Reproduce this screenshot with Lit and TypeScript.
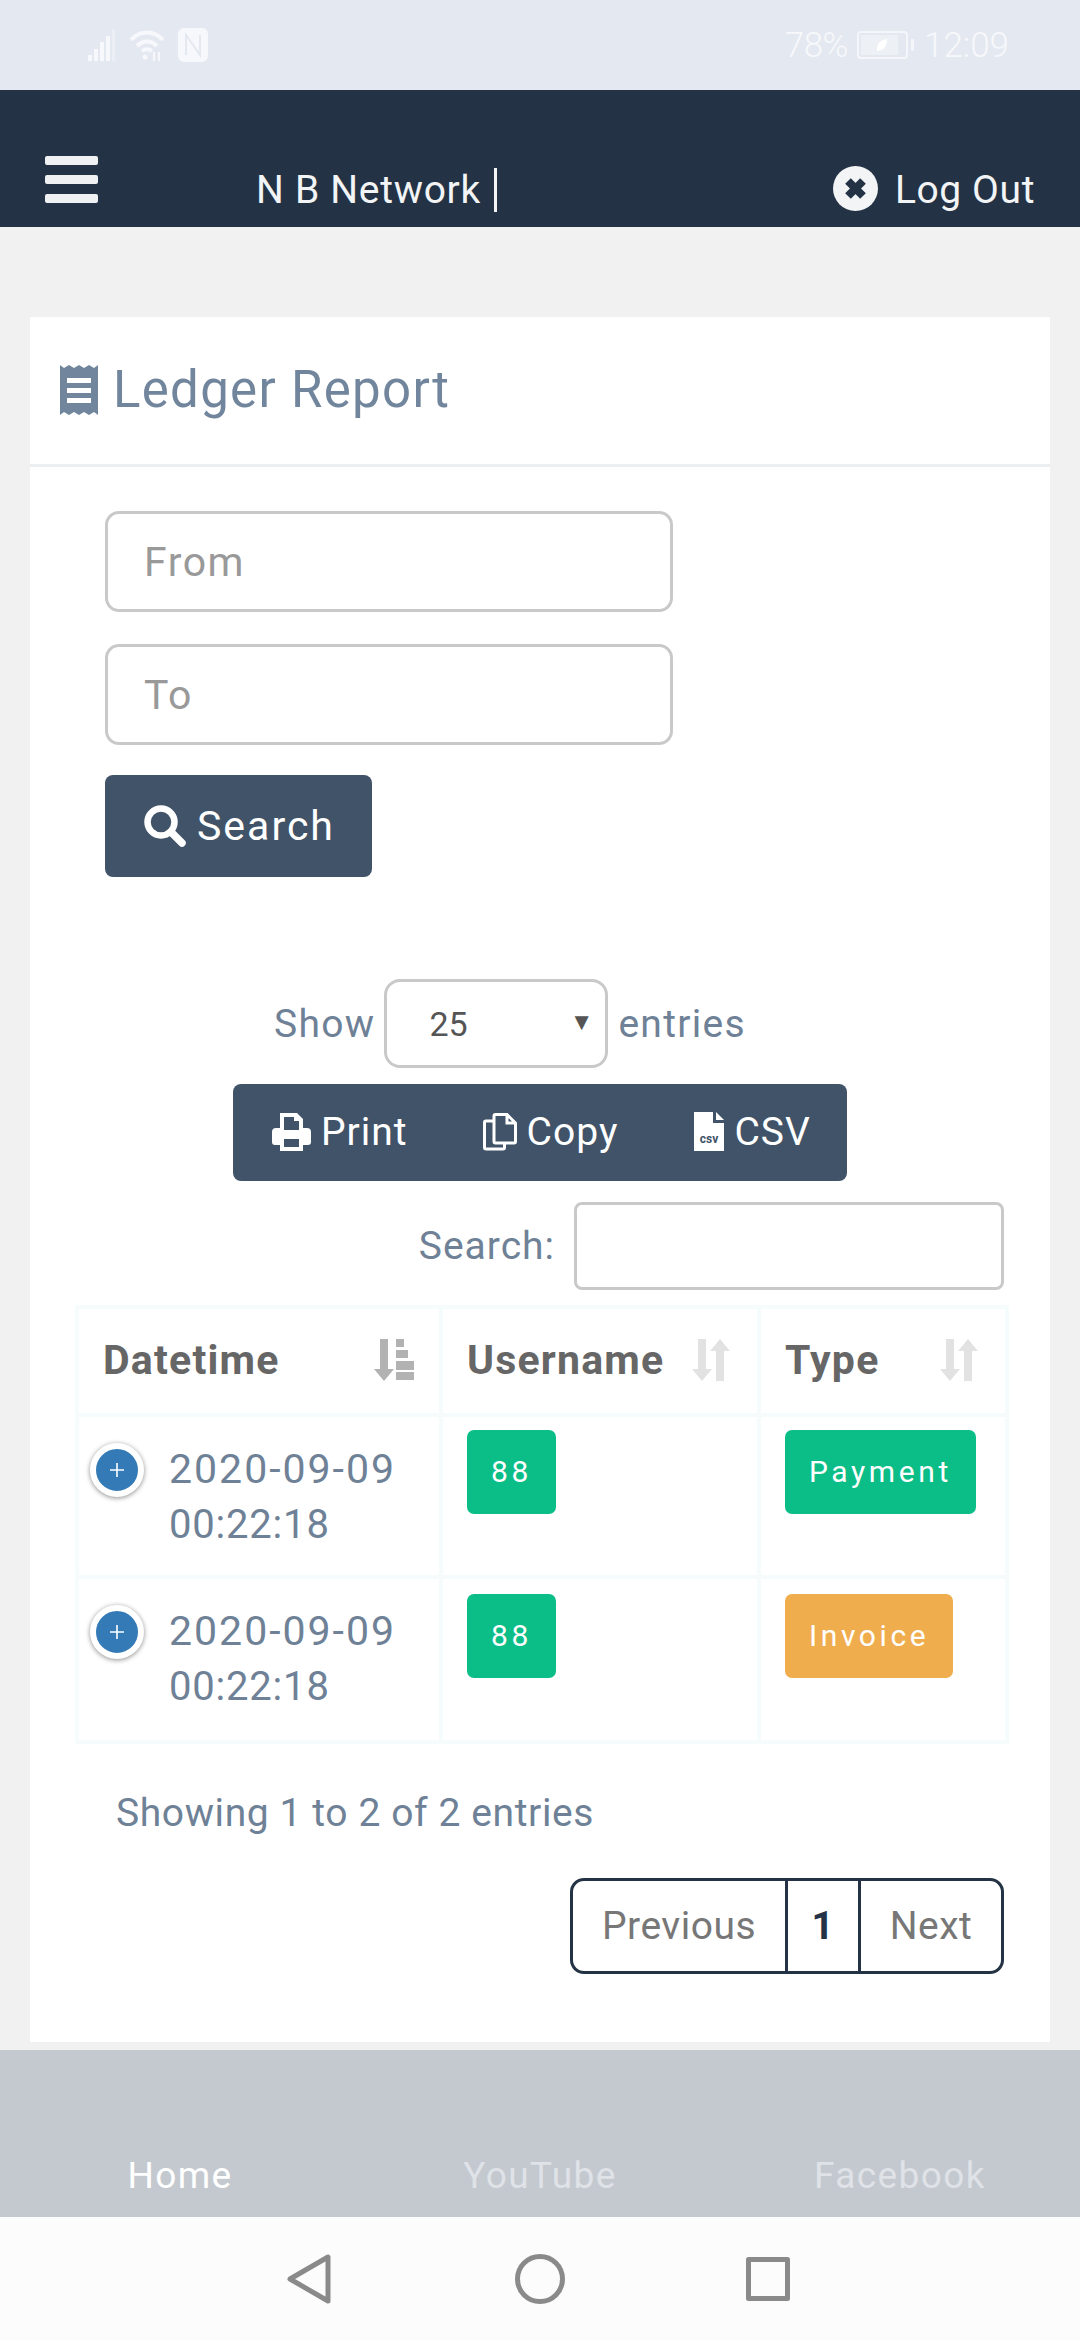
import { LitElement, html, css, svg } from "lit";
import { customElement } from "lit/decorators.js";

const plusBtn = html`<span class="plus"><svg width="14" height="14" viewBox="0 0 14 14"><path d="M7 0v14M0 7h14" stroke="#fff" stroke-width="1.6"/></svg></span>`;

const sortIcon = (active: boolean) => {
  const c = active ? "#b2b2b2" : "#e2e2e2";
  return html`<svg class="sort" width="40" height="42" viewBox="0 0 40 42">
    <path d="M6 0h8v30h6L10 42 0 30h6z" fill="${c}"/>
    ${active
      ? svg`<path d="M22 0h8v8h-8zM22 11h12v8H22zM22 22h18v9H22zM22 33h18v8H22z" fill="${c}"/>`
      : svg`<path d="M34 42h-8V12h-6L30 0l10 12h-6z" fill="${c}" transform="translate(-2 0)"/>`}
  </svg>`;
};

@customElement("app-root")
export class AppRoot extends LitElement {
  static styles = css`
    :host { display: block; width: 1080px; height: 2340px; overflow: hidden; background: #f1f1f1;
      font-family: Roboto, "Liberation Sans", sans-serif; font-size: 39px; color: #6e8196; }
    * { box-sizing: border-box; }
    .status { height: 90px; background: #e4e8f0; display: flex; align-items: center; padding: 0 71px 0 88px; color: #f7f8fb; font-size: 35px; font-weight: 300; }
    .status .left { display: flex; align-items: center; gap: 12px; }
    .status .right { margin-left: auto; display: flex; align-items: center; gap: 9px; }
    .status .pct { letter-spacing: -0.5px; }
    .topbar { height: 137px; background: #233345; color: #f2f4f6; display: flex; align-items: flex-end; padding: 0 45px; }
    .burger { width: 53px; display: flex; flex-direction: column; gap: 10px; margin-bottom: 24px; }
    .burger i { display: block; height: 9px; background: #eff1f3; border-radius: 2px; }
    .brand { margin-left: 158px; height: 64px; display: flex; align-items: center; gap: 13px; margin-bottom: 5px; font-size: 39px; letter-spacing: 0.7px; }
    .brand .caret { width: 3px; height: 44px; background: #f2f4f6; }
    .logout { margin-left: auto; display: flex; align-items: center; gap: 17px; font-size: 39px; letter-spacing: 0.6px; margin-bottom: 5px; height: 64px; }
    .logout svg { margin-top: -4px; }
    .card { margin: 90px 30px 0; height: 1725px; background: #fff; }
    .card-head { height: 150px; border-bottom: 3px solid #eceeef; display: flex; align-items: center; gap: 15px; padding: 0 0 2px 30px; font-size: 51px; letter-spacing: 1.3px; color: #71869c; }
    .body { display: flex; flex-direction: column; }
    .range { padding: 44px 0 0 75px; display: flex; flex-direction: column; gap: 32px; font-size: 41px; }
    input { display: block; border: 3px solid #c9c9c9; border-radius: 14px; background: #fff; font: inherit; outline: none; }
    .range input { width: 568px; height: 101px; padding: 0 36px; letter-spacing: 1.5px; }
    input::placeholder { color: #999; opacity: 1; }
    .go { width: 267px; height: 102px; background: #415368; border-radius: 8px; color: #fff; display: flex; align-items: center; gap: 11px; padding-left: 39px; letter-spacing: 2px; margin-top: -2px; }
    .show { margin-top: 102px; height: 89px; padding-left: 244px; display: flex; align-items: center; gap: 9px; letter-spacing: 1.3px; }
    .select { width: 224px; height: 89px; border: 3px solid #c9c9c9; border-radius: 16px; display: flex; align-items: center; justify-content: space-between; padding: 0 12px 0 42px; color: #555; font-size: 34px; letter-spacing: 0; margin-right: 1px; }
    .select span:last-child { font-size: 24px; margin-top: -4px; }
    .tools { margin: 16px auto 0; width: 614px; height: 97px; background: #415368; border-radius: 8px; display: flex; align-items: center; color: #fff; padding: 0 0 2px 39px; letter-spacing: 1px; }
    .tools div { display: flex; align-items: center; gap: 10px; }
    .tools div:nth-child(2) { margin-left: 75px; }
    .tools div:nth-child(3) { margin-left: 76px; }
    .find { margin-top: 21px; height: 88px; display: flex; justify-content: flex-end; align-items: center; gap: 19px; padding-right: 46px; letter-spacing: 1px; }
    .find input { width: 430px; height: 88px; border-radius: 8px; }
    .wrap { padding: 15px 42px 0 45px; }
    table { width: 930px; border-collapse: collapse; table-layout: fixed; border: 4px solid #f6fbfb; }
    th, td { border: 4px solid #f6fbfb; padding: 0; vertical-align: top; text-align: left; position: relative; }
    th { height: 108px; vertical-align: middle; color: #666; font-size: 41px; font-weight: 700; letter-spacing: 1.2px; }
    .th { display: flex; align-items: center; justify-content: space-between; padding: 0 25px 2px 24px; }
    tr.r1 td { height: 162px; }
    tr.r2 td { height: 165px; }
    .dt { padding: 25px 0 0 90px; line-height: 55px; }
    .dt .d { font-size: 41px; letter-spacing: 2px; display: block; }
    .dt .t { letter-spacing: 0.8px; font-size: 40px; display: block; }
    .plus { position: absolute; left: 11px; top: 26px; width: 54px; height: 54px; border-radius: 50%; background: #337ab7; border: 6px solid #fff; box-shadow: 0 1px 5px rgba(0,0,0,.45); display: flex; align-items: center; justify-content: center; }
    .badge { display: inline-block; height: 84px; line-height: 84px; margin: 13px 0 0 24px; padding: 0 24px; border-radius: 7px; background: #0bbd87; color: #fff; font-size: 30px; letter-spacing: 3.6px; }
    tr.r2 .badge { margin-top: 15px; }
    .badge.warn { background: #f0ad4e; }
    .info { margin: 41px 0 0 86px; height: 56px; line-height: 56px; letter-spacing: 0.6px; }
    .pager-row { display: flex; justify-content: flex-end; margin-top: 37px; padding-right: 46px; }
    .pager { height: 96px; border: 3px solid #233345; border-radius: 14px; display: flex; color: #777; letter-spacing: 0.5px; }
    .pager div { display: flex; align-items: center; justify-content: center; }
    .pager .p { width: 212px; }
    .pager .n { width: 76px; border-left: 3px solid #233345; border-right: 3px solid #233345; color: #233345; font-weight: 700; }
    .pager .x { width: 140px; }
    .foot { margin-top: 8px; height: 167px; background: #c4c9d0; display: grid; grid-template-columns: repeat(3, 360px); align-items: end; justify-items: center; padding-bottom: 20px; font-size: 37px; letter-spacing: 1.4px; color: #dfe2e7; }
    .foot .on { color: #fff; }
    .nav { height: 123px; background: #fcfcfc; display: flex; align-items: center; justify-content: center; padding-right: 4px; }
    .nav svg { display: block; }
    .nav .b { margin-right: 184px; }
    .nav .s { margin-left: 181px; }
  `;

  render() {
    return html`
      <div class="status">
        <div class="left">
          <svg width="28" height="32" viewBox="0 0 28 32" fill="#f7f8fb"><rect x="0" y="26" width="4" height="6"/><rect x="6" y="20" width="4" height="12"/><rect x="12" y="13" width="4" height="19"/><rect x="18" y="7" width="4" height="25"/><rect x="24" y="0" width="3" height="32" opacity=".45"/></svg>
          <svg width="38" height="32" viewBox="0 0 36 32" fill="none" stroke="#f7f8fb" stroke-width="4"><path d="M2 11C11 1 25 1 34 11"/><path d="M8 17c6-6 14-6 20 0"/><path d="M13 22c3-2 7-2 10 0"/><circle cx="16" cy="28" r="2.5" fill="#f7f8fb" stroke="none"/><path d="M25 23v9M30 23v9" stroke-width="2"/></svg>
          <svg width="30" height="34" viewBox="0 0 30 34"><rect width="30" height="34" rx="6" fill="#f7f8fb"/><path d="M8 27V7l14 20V7" fill="none" stroke="#e4e8f0" stroke-width="2"/></svg>
        </div>
        <div class="right">
          <span class="pct">78%</span>
          <svg width="58" height="28" viewBox="0 0 58 28"><rect x="1" y="1" width="49" height="26" rx="3" fill="none" stroke="#f4f6fa" stroke-width="2"/><rect x="4" y="4" width="37" height="20" fill="#f4f6fa" opacity=".55"/><path d="M20 20c-1-8 4-11 10-12 0 7-3 12-10 12z" fill="#fff"/><rect x="54" y="8" width="3" height="12" rx="1" fill="#f4f6fa"/></svg>
          <span>12:09</span>
        </div>
      </div>

      <div class="topbar">
        <div class="burger"><i></i><i></i><i></i></div>
        <div class="brand"><span>N B Network</span><span class="caret"></span></div>
        <div class="logout">
          <svg width="45" height="45" viewBox="0 0 45 45"><circle cx="22.5" cy="22.5" r="22.5" fill="#f2f4f6"/><path d="M15 15l15 15M30 15L15 30" stroke="#233345" stroke-width="8"/></svg>
          <span>Log Out</span>
        </div>
      </div>

      <div class="card">
        <div class="card-head">
          <svg width="38" height="50" viewBox="0 0 38 50" fill="#71869c"><path fill-rule="evenodd" d="M0 0l4 3 5-3 5 3 5-3 5 3 5-3 5 3 4-3v50l-4-3-5 3-5-3-5 3-5-3-5 3-5-3-4 3zM7 13v5h24v-5zM7 23v5h24v-5zM7 33v5h24v-5z"/></svg>
          <span>Ledger Report</span>
        </div>
        <div class="body">
          <div class="range">
            <input placeholder="From" />
            <input placeholder="To" />
            <div class="go">
              <svg width="42" height="42" viewBox="0 0 42 42" fill="none" stroke="#fff"><circle cx="17" cy="17" r="13.5" stroke-width="6.5"/><path d="M27 27l11 11" stroke-width="7.5" stroke-linecap="round"/></svg>
              <span>Search</span>
            </div>
          </div>

          <div class="show">
            <span>Show</span>
            <div class="select"><span>25</span><span>▼</span></div>
            <span>entries</span>
          </div>

          <div class="tools">
            <div>
              <svg width="39" height="38" viewBox="0 0 39 38" fill="#fff"><path fill-rule="evenodd" d="M8 0h17l6 6v9h4a4 4 0 0 1 4 4v10a3 3 0 0 1-3 3h-5v6H8v-6H3a3 3 0 0 1-3-3V19a4 4 0 0 1 4-4h4zM12 4v13h15V8h-5V4zM12 26v8h15v-8z"/></svg>
              <span>Print</span>
            </div>
            <div>
              <svg width="34" height="38" viewBox="0 0 34 38" fill="none" stroke="#fff" stroke-width="3"><path d="M11 8H3a1.500 1.500 0 0 0-1.500 1.500v25A1.500 1.500 0 0 0 3 36h17a1.500 1.500 0 0 0 1.500-1.500V30"/><path d="M11 3a1.500 1.500 0 0 1 1.500-1.500H24L32.500 10v18.500A1.500 1.500 0 0 1 31 30H12.500A1.500 1.500 0 0 1 11 28.500zM24 2v8h8"/></svg>
              <span>Copy</span>
            </div>
            <div>
              <svg width="30" height="39" viewBox="0 0 30 39"><path d="M0 0h19v11h11v28H0zM22 0l8 8h-8z" fill="#fff"/><text x="15" y="31" text-anchor="middle" font-size="12" font-family="Roboto, sans-serif" font-weight="700" fill="#415368" letter-spacing="0">csv</text></svg>
              <span>CSV</span>
            </div>
          </div>

          <div class="find"><span>Search:</span><input /></div>

          <div class="wrap">
            <table>
              <colgroup><col style="width:364px" /><col style="width:318px" /><col style="width:248px" /></colgroup>
              <thead>
                <tr>
                  <th><div class="th"><span>Datetime</span>${sortIcon(true)}</div></th>
                  <th><div class="th"><span>Username</span>${sortIcon(false)}</div></th>
                  <th><div class="th"><span>Type</span>${sortIcon(false)}</div></th>
                </tr>
              </thead>
              <tbody>
                <tr class="r1">
                  <td>${plusBtn}<div class="dt"><span class="d">2020-09-09</span><span class="t">00:22:18</span></div></td>
                  <td><span class="badge">88</span></td>
                  <td><span class="badge">Payment</span></td>
                </tr>
                <tr class="r2">
                  <td>${plusBtn}<div class="dt"><span class="d">2020-09-09</span><span class="t">00:22:18</span></div></td>
                  <td><span class="badge">88</span></td>
                  <td><span class="badge warn">Invoice</span></td>
                </tr>
              </tbody>
            </table>
          </div>

          <div class="info">Showing 1 to 2 of 2 entries</div>
          <div class="pager-row">
            <div class="pager">
              <div class="p">Previous</div>
              <div class="n">1</div>
              <div class="x">Next</div>
            </div>
          </div>
        </div>
      </div>

      <div class="foot"><span class="on">Home</span><span>YouTube</span><span>Facebook</span></div>
      <div class="nav">
        <svg class="b" width="44" height="50" viewBox="0 0 44 50" fill="none" stroke="#8a8a8a" stroke-width="5" stroke-linejoin="round"><path d="M41 3v44L3 25z"/></svg>
        <svg width="50" height="50" viewBox="0 0 50 50" fill="none" stroke="#8a8a8a" stroke-width="5"><circle cx="25" cy="25" r="22.500"/></svg>
        <svg class="s" width="44" height="44" viewBox="0 0 44 44" fill="none" stroke="#8a8a8a" stroke-width="5" stroke-linejoin="round"><rect x="2.500" y="2.500" width="39" height="39"/></svg>
      </div>
    `;
  }
}
